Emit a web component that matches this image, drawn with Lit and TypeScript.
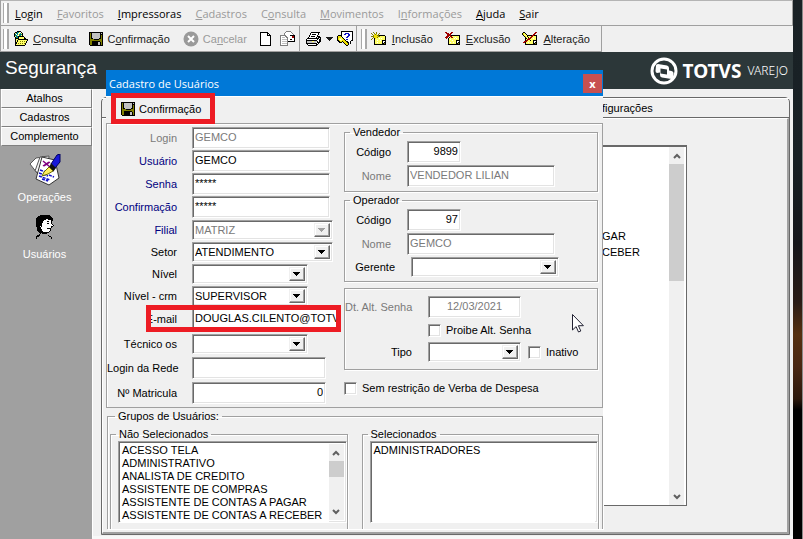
import { LitElement, html, svg, css } from "lit";
import { customElement, property } from "lit/decorators.js";

/* Icons are drawn as small bitmaps: one character per pixel. */
const PALETTE: Record<string, string> = {
  k: "#000000", y: "#ffff66", o: "#808000", w: "#ffffff", g: "#808080",
  l: "#c0c0c0", r: "#a00000", b: "#000080", B: "#1010c8", t: "#008080",
  G: "#909090", Y: "#f0e000", p: "#800080",
};

const BITMAPS: Record<string, string[]> = {
  folder: [
    "....kkkk........",
    "..kkttywk.......",
    ".kyttwytyk......",
    ".ktwtytttk......",
    ".kttywttyk......",
    ".kyttkkkkkk.....",
    "..kttkyyyyyk....",
    "..kkkkyyyyykk...",
    "..kyykkkkkkkkkk.",
    "..kykyyyyyyyyyk.",
    "..kykyyoyoyoyk..",
    "..kkyyyyyyyyyk..",
    "..kkyoyoyoyok...",
    "..kyyyyyyyyyk...",
    "..kkkkkkkkkk....",
  ],
  disk: [
    "kkkkkkkkkkkkkk",
    "kokllllllllklk",
    "kokllllllllkkk",
    "kokllllllllkok",
    "kokllllllllkok",
    "kokllllllllkok",
    "kokkllllllkkok",
    "kooookkkkkoook",
    "kooooooooooook",
    "kookkkkkkkkook",
    "kookkkkkkllkok",
    "kookkkkkkllkok",
    "kookkkkkkllkok",
    ".kkkkkkkkkkkkk",
  ],
  page: [
    "kkkkkkkk...",
    "kwwwwwwkk..",
    "kwwwwwwkwk.",
    "kwwwwwwkkkk",
    "kwwwwwwwwwk",
    "kwwwwwwwwwk",
    "kwwwwwwwwwk",
    "kwwwwwwwwwk",
    "kwwwwwwwwwk",
    "kwwwwwwwwwk",
    "kwwwwwwwwwk",
    "kwwwwwwwwwk",
    "kwwwwwwwwwk",
    "kkkkkkkkkkk",
  ],
  mail: [
    "......ggggg.....",
    ".....gwwwwwg....",
    "....gwwwwwwwg...",
    "....gwwwwwwwwg..",
    "ggggggwwwwkkkkk.",
    "gwwwwggwwwwwrrk.",
    "gwlllwggwwwwrrk.",
    "gwwwwwwgwwwwwwk.",
    "gwlllllgwwkkwwk.",
    "gwwwwwwgwwwwwwk.",
    "gwlllllgkkkkkkk.",
    "gwwwwwwg........",
    "gwlllllg........",
    "gwwwwwwg........",
    "gggggggg........",
  ],
  printer: [
    ".....kkkkkkkkk..",
    "....kwwwwwwwk...",
    "....kwkkkkwwk...",
    "...kwwwwwwwk....",
    "...kwkkkkwwkkk..",
    "..kwwwwwwwk.kkk.",
    ".kkkkkkkkkkkkwk.",
    "kwwwwwwwwwwkwkk.",
    "kkkkkkkkkkkwwkk.",
    "klllllyylllkwkk.",
    "klllllllllwkkk..",
    "kkkkkkkkkkkwk...",
    ".kwwwwwwwwkk....",
    "..kkkkkkkkk.....",
  ],
  help: [
    "....kkkkkkkkkkkk",
    "....kwwwwwwwwwwk",
    "....kwwwBBBBwwwk",
    "....kwwBBwwBBwwk",
    ".kkkkwwwwwwBBwwk",
    "kYYYkwwwwwBBwwwk",
    "kYYYykwwwBBwwwwk",
    "kYyyyYkwwwwwwwwk",
    "kYywyyYkwBBwwwwk",
    "kkYyyYYYkwwwwwkk",
    ".kkYYkYYYkkwwk..",
    "..kkk.kYYYkkwk..",
    ".......kYYYk.k..",
    "........kYYk....",
    ".........kk.....",
  ],
  include: [
    "..o..o...........",
    "o..o.o..o........",
    ".o.YoY.o.........",
    "..oYYYookkkkkk...",
    "oooYYYYooyyyyyk..",
    "..oYYYoyyyyyyyk..",
    ".o.kYyyywywyyyk..",
    "o..kyyyyyyyyyyk..",
    "...kyywyywykkkk..",
    "...kyyyyyyykwwk..",
    "...kyywyyyykwkk..",
    "...kyyyyyyykkok..",
    "...kkkkkkkkkkkk..",
  ],
  exclude: [
    "rr....rr.........",
    ".rrr.rr..........",
    "..rrrr...........",
    "..rrrrkkkkkkkkk..",
    ".rrr.rryyyyyyyk..",
    "rrr.kyrryywyyyk..",
    ".r.kyyyyywywyyk..",
    "...kywyyyyyyyyk..",
    "...kyyywyyykkkk..",
    "...kyyyyyyykwwk..",
    "...kywyywyykwkk..",
    "...kyyyyyyykkok..",
    "...kkkkkkkkkkkk..",
  ],
  edit: [
    ".kk..........rr..",
    "kYyk........rr...",
    "kYyyk......rr....",
    ".kyyykkkkkrrkkk..",
    "..kYykyyyrryyyk..",
    "...kyykyrryyyyk..",
    "...kkyrrryywyyk..",
    "...kyrrryyyyyyk..",
    "...krryykyykkkk..",
    "..rrryyyyyykwwk..",
    ".rrkyywyyyykwkk..",
    "...kyyyyyyykkok..",
    "...kkkkkkkkkkkk..",
  ],
  face: [
    "....kkkkkkkkkk....",
    "..kkkkkkkkkkkkk...",
    ".kkkkkkkkkkkkkkk..",
    "kkkkkkkkkkkkkkkkk.",
    "kkkkkkkkkkwwkkkkk.",
    "kkkkkkkkwwwwwwwkk.",
    "kkkkkkkwwwwkkwwk..",
    "kkkkkkkwwwwwwwwk..",
    "kkkkkkwwwwwkkwwk..",
    "kkkkkkwwwwwwwwwwk.",
    "kkkkkkwwwwwwwwwwwk",
    "kkkkwkwwwwwwwwwkk.",
    ".kkkkwwwwwwwwwwk..",
    ".kkkkwwwwwwkkkk...",
    ".kkkkkwwwwwwwwk...",
    ".kkkkkwwwwwwwwk...",
    "..kkkkkwwwwwwk....",
    "...kkkkkkkkkk.....",
    "....k.kkkkk.......",
    "...k..............",
    ".kkk........k.....",
    "kkk..........kk...",
    "k..............k..",
    "k..............k..",
  ],
};

function bitmap(name: string) {
  const rows = BITMAPS[name];
  const w = Math.max(...rows.map((r) => r.length));
  const cells = rows.flatMap((row, y) => {
    const out = [];
    for (let x = 0; x < row.length; ) {
      let n = 1;
      while (row[x + n] === row[x]) n++;
      if (row[x] !== ".") out.push(svg`<rect x=${x} y=${y} width=${n} height="1" fill=${PALETTE[row[x]]}></rect>`);
      x += n;
    }
    return out;
  });
  return html`<svg class="icon" width=${w} height=${rows.length} viewBox="0 0 ${w} ${rows.length}" shape-rendering="crispEdges" aria-hidden="true">${cells}</svg>`;
}

const cancelIcon = html`<svg class="icon" width="16" height="16" viewBox="0 0 16 16" aria-hidden="true">
  <circle cx="8" cy="8" r="7.5" fill="#9a9a9a"></circle>
  <path d="M5 5l6 6M11 5l-6 6" stroke="#fff" stroke-width="2"></path></svg>`;

const papersIcon = html`<svg class="icon" width="32" height="32" viewBox="0 0 32 32" aria-hidden="true">
  <path d="M1 10L7 4L14 3L12 22L8 19Z" fill="#fff" stroke="#555"></path>
  <path d="M6 17L11 3L20 2L18 24Z" fill="#f4f4f4" stroke="#555"></path>
  <path d="M13 3L26 6L30 24L20 31L7 25Z" fill="#fff" stroke="#333"></path>
  <path d="M14 7l7 6M20 8l-6 4M15 12l6-4" stroke="#800080" stroke-width="1.5"></path>
  <path d="M11 16l6 2M10 19l9 3M10 22l11 4M20 21l5 2M13 25l6 2" stroke="#1010c8" stroke-width="1.5" stroke-dasharray="3 1"></path>
  <path d="M31 0v8l-5 6-4-4 6-9z" fill="#1818d8" stroke="#000060"></path>
  <path d="M22 9l5 5-3 4-4-4z" fill="#111"></path>
  <path d="M20 13l4 4-5 3-6 2 2-4z" fill="#ffee60" stroke="#6a6a00"></path></svg>`;

const caret = html`<svg width="8" height="4" viewBox="0 0 8 4" shape-rendering="crispEdges" aria-hidden="true"><path d="M0 0h7v1h-1v1h-1v1h-1v1h-1v-1h-1v-1h-1v-1h-1z" fill="currentColor"></path></svg>`;

const chevron = (down: boolean) => html`<svg width="8" height="6" viewBox="0 0 8 6" aria-hidden="true">
  <path d=${down ? "M1 1L4 4L7 1" : "M1 5L4 2L7 5"} fill="none" stroke="#606060" stroke-width="2"></path></svg>`;

const base = css`
  * { box-sizing: border-box; }
  .icon { display: block; flex: none; }
  button, input, select { font: inherit; color: inherit; margin: 0; border-radius: 0; outline: none; }
  button { padding: 0; background: none; border: 0; }
`;

const sunken = css`
  .sunken {
    background: #fff;
    border: 1px solid;
    border-color: #a0a0a0 #fff #fff #a0a0a0;
    box-shadow: inset 1px 1px #696969, inset -1px -1px #e3e3e3;
  }
`;

@customElement("menu-strip")
class MenuStrip extends LitElement {
  static styles = [base, css`
    :host { display: block; background: #f0f0f0; border-left: 1px solid #a0a0a0; }
    .row { display: flex; align-items: center; height: 26px; border-bottom: 1px solid #a0a0a0; }
    .menus { gap: 14px; font: 11px "Open Sans", sans-serif; color: #000; border-right: 1px solid #a0a0a0; border-top: 1px solid #b4b4b4; }
    .menus button { white-space: nowrap; }
    button:disabled { color: #9a9a9a; }
    .grip { flex: none; width: 6px; height: 20px; margin: 0 4px 0 2px; border: solid #a8a8a8; border-width: 0 1px; background: linear-gradient(#a8a8a8, #a8a8a8) 3px 0 / 1px 100% no-repeat, #fff; }
    .menus .grip { margin-right: -8px; }
    .tools { width: max-content; color: #1c1c1c; border-right: 1px solid #a0a0a0; padding-right: 11px; }
    .tool { display: flex; align-items: center; gap: 4px; white-space: nowrap; }
    .a { margin-right: 13px; }
    .b { margin-right: 12px; }
    .c { margin-right: 9px; }
    .d { margin-right: 3px; }
    .sep { align-self: stretch; width: 1px; background: #a0a0a0; margin-right: 6px; }
    .thin { margin-right: 2px; }
  `];
  render() {
    const menus: [string, string, string, boolean][] = [
      ["", "L", "ogin", true], ["", "F", "avoritos", false], ["", "I", "mpressoras", true],
      ["", "C", "adastros", false], ["C", "o", "nsulta", false], ["", "M", "ovimentos", false],
      ["I", "n", "formações", false], ["", "A", "juda", true], ["", "S", "air", true],
    ];
    return html`
      <nav class="row menus"><span class="grip"></span>
        ${menus.map(([p, u, s, on]) => html`<button ?disabled=${!on}>${p}<u>${u}</u>${s}</button>`)}
      </nav>
      <div class="row tools"><span class="grip"></span>
        <button class="tool a">${bitmap("folder")}<span><u>C</u>onsulta</span></button>
        <button class="tool a">${bitmap("disk")}<span>C<u>o</u>nfirmação</span></button>
        <button class="tool a" disabled>${cancelIcon}<span>Ca<u>n</u>celar</span></button>
        <button class="tool c" aria-label="Novo">${bitmap("page")}</button>
        <button class="tool d" aria-label="Mensagem">${bitmap("mail")}</button>
        <span class="sep"></span>
        <button class="tool d" aria-label="Imprimir">${bitmap("printer")}${caret}</button>
        <button class="tool d" aria-label="Ajuda">${bitmap("help")}</button>
        <span class="sep thin"></span><span class="grip"></span>
        <button class="tool b">${bitmap("include")}<span><u>I</u>nclusão</span></button>
        <button class="tool b">${bitmap("exclude")}<span><u>E</u>xclusão</span></button>
        <button class="tool">${bitmap("edit")}<span><u>A</u>lteração</span></button>
      </div>`;
  }
}

@customElement("side-nav")
class SideNav extends LitElement {
  static styles = [base, css`
    :host { display: flex; flex-direction: column; width: 92px; border-left: 1px solid #a0a0a0; background: #a0a0a0; }
    .tab { height: 19px; background: #f0f0f0; border: 1px solid; border-color: #fff #808080 #808080 #fff; text-align: center; color: #000; padding: 0 4px 1px 0; }
    .item { display: flex; flex-direction: column; align-items: center; gap: 4px; color: #fff; padding-right: 4px; }
    .first { margin-top: 8px; margin-bottom: 11px; }
    .last { gap: 8px; }
  `];
  render() {
    return html`
      ${["Atalhos", "Cadastros", "Complemento"].map((t) => html`<button class="tab">${t}</button>`)}
      <button class="item first">${papersIcon}<span>Operações</span></button>
      <button class="item last">${bitmap("face")}<span>Usuários</span></button>`;
  }
}

@customElement("scroll-bar")
class ScrollBar extends LitElement {
  @property({ type: Number }) thumb = 20;
  static styles = css`
    :host { display: flex; flex-direction: column; width: 15px; flex: none; background: #f0f0f0; }
    .arrow { display: flex; align-items: center; justify-content: center; height: 17px; flex: none; }
    .track { flex: 1; }
    .thumb { background: #cdcdcd; }
  `;
  render() {
    return html`<span class="arrow">${chevron(false)}</span>
      <div class="track"><div class="thumb" style="height:${this.thumb}%"></div></div>
      <span class="arrow">${chevron(true)}</span>`;
  }
}

@customElement("user-dialog")
class UserDialog extends LitElement {
  static styles = [base, sunken, css`
    :host { display: block; background: #f0f0f0; color: #000; }
    .title { display: flex; align-items: center; height: 26px; background: #0078d7; color: #fff; padding: 0 1px 0 3px; font: 11px "Open Sans", sans-serif; }
    .title h2 { flex: 1; margin: 0; font: inherit; }
    .close { width: 19px; height: 19px; background: #c75050; font: bold 11px/15px "Open Sans", sans-serif; }
    .bar { position: relative; height: 27px; padding: 0 0 2px 15px; display: flex; align-items: center; border-top: 1px solid #fff; }
    .confirm { display: flex; align-items: center; gap: 4px; }
    .mark { position: absolute; border: 5px solid #ed1c24; pointer-events: none; }
    .mark-bar { left: 5px; width: 104px; top: -4px; height: 31px; z-index: 2; }
    .mark-mail { left: 39px; right: 3px; top: -3px; bottom: -2px; z-index: 2; }
    .panel { border: 1px solid #a0a0a0; box-shadow: inset 1px 1px #fff; display: grid; grid-template-columns: 237px 1fr; padding: 0 4px 3px 0; }
    .left { padding-top: 3px; display: flex; flex-direction: column; }
    .set { display: flex; flex-direction: column; }
    .pitch1 { gap: 1px; }
    .pitch2 { gap: 2px; padding-top: 2px; }
    .pitch3 { gap: 3px; padding-top: 4px; }
    .f { display: flex; align-items: center; position: relative; }
    .f label { text-align: right; white-space: nowrap; flex: none; }
    .left label { width: 70px; margin-right: 15px; }
    .blue { color: #000080; }
    .dim { color: #7a7a7a; }
    .in { height: 22px; padding: 0 2px 2px; display: block; min-width: 0; }
    .in:disabled { color: #7a7a7a; }
    .num { text-align: right; }
    .mid { text-align: center; }
    .combo { position: relative; display: flex; height: 20px; padding: 2px; }
    .combo select { appearance: none; border: 0; background: #fff; width: 100%; padding: 0; opacity: 1; }
    .combo select:disabled { color: #7a7a7a; }
    .drop { flex: none; width: 16px; display: flex; align-items: center; justify-content: center; background: #f0f0f0; border: 1px solid; border-color: #f0f0f0 #696969 #696969 #f0f0f0; box-shadow: inset -1px -1px #a0a0a0, inset 1px 1px #fff; }
    .dim .drop { color: #a0a0a0; }
    .w54 { width: 54px; } .w93 { width: 93px; } .w116 { width: 116px; } .w134 { width: 134px; }
    .w138 { width: 138px; } .w141 { width: 141px; } .w148 { width: 148px; }
    fieldset { margin: 0; min-width: 0; padding: 0; border: 1px solid #a0a0a0; box-shadow: 1px 1px #fff, inset 1px 1px #fff; }
    legend { margin-left: 5px; padding: 0 3px; line-height: 14px; }
    .right { padding-top: 1px; display: flex; flex-direction: column; }
    .person { padding: 2px 0 4px; margin-bottom: 1px; }
    .person label { width: 46px; margin-right: 16px; }
    .person .wide { width: 50px; }
    .person .rows { display: flex; flex-direction: column; gap: 2px; }
    .status { margin-top: 5px; padding: 7px 0; display: flex; flex-direction: column; gap: 3px; }
    .status .lead { width: 67px; margin-right: 16px; }
    .check { display: flex; align-items: center; gap: 5px; white-space: nowrap; }
    .check input { appearance: none; width: 13px; height: 13px; flex: none; }
    .indent { margin-left: 83px; height: 18px; }
    .inactive { margin-left: 7px; }
    .free { margin-top: 11px; }
    .groups { display: grid; grid-template-columns: 1fr 1fr; column-gap: 14px; margin: 0 0 0 1px; padding: 4px 3px 0 2px; margin-top: 1px; border-bottom: 0; }
    .groups fieldset { border-bottom: 0; padding: 0 0 6px 7px; }
    .groups fieldset legend { margin-left: -2px; }
    .list { display: flex; height: 82px; padding: 2px; }
    .list select { flex: 1; min-width: 0; border: 0; padding: 0; background: #fff; overflow: hidden; color: #000; height: 78px; }
    .list option { padding: 0 1px; min-height: 13px; height: 13px; line-height: 14px; overflow: visible; white-space: nowrap; }
    .pointer { position: absolute; left: 466px; top: 244px; }
  `];

  field(id: string, label: string, value: string, w: string, o: { blue?: boolean; off?: boolean; cls?: string; mark?: boolean } = {}) {
    return html`<div class="f"><label for=${id} class=${o.blue ? "blue" : o.off ? "dim" : ""}>${label}</label>
      <input id=${id} class="in sunken ${w} ${o.cls ?? ""}" type="text" .value=${value} ?disabled=${o.off}>
      ${o.mark ? html`<span class="mark mark-mail"></span>` : ""}</div>`;
  }
  combo(id: string, label: string, value: string, w: string, cls = "", off = false) {
    return html`<div class="f"><label for=${id} class=${cls}>${label}</label>
      <span class="combo sunken ${w} ${off ? "dim" : ""}"><select id=${id} ?disabled=${off}><option>${value}</option></select><span class="drop">${caret}</span></span></div>`;
  }

  render() {
    const groups = ["ACESSO TELA", "ADMINISTRATIVO", "ANALISTA DE CREDITO", "ASSISTENTE DE COMPRAS", "ASSISTENTE DE CONTAS A PAGAR", "ASSISTENTE DE CONTAS A RECEBER"];
    return html`
      <header class="title"><h2>Cadastro de Usuários</h2><button class="close" aria-label="Fechar">x</button></header>
      <div class="bar"><button class="confirm">${bitmap("disk")}<span>Confirmação</span></button><span class="mark mark-bar"></span></div>
      <div class="panel">
        <div class="left">
          <div class="set pitch1">
            ${this.field("login", "Login", "GEMCO", "w138", { off: true })}
            ${this.field("user", "Usuário", "GEMCO", "w138", { blue: true })}
            ${this.field("pass", "Senha", "*****", "w138", { blue: true })}
            ${this.field("pass2", "Confirmação", "*****", "w138", { blue: true })}
          </div>
          <div class="set pitch2">
            ${this.combo("branch", "Filial", "MATRIZ", "w141", "blue", true)}
            ${this.combo("sector", "Setor", "ATENDIMENTO", "w141")}
            ${this.combo("level", "Nível", "", "w116")}
            ${this.combo("crm", "Nível - crm", "SUPERVISOR", "w116")}
            ${this.field("mail", "E-mail", "DOUGLAS.CILENTO@TOTVS", "w148", { mark: true })}
          </div>
          <div class="set pitch3">
            ${this.combo("tech", "Técnico os", "", "w116")}
            ${this.field("net", "Login da Rede", "", "w134")}
            ${this.field("reg", "Nº Matricula", "0", "w134", { cls: "num" })}
          </div>
        </div>
        <div class="right">
          <fieldset class="person"><legend>Vendedor</legend><div class="rows">
            ${this.field("vcod", "Código", "9899", "w54", { cls: "num" })}
            ${this.field("vnome", "Nome", "VENDEDOR LILIAN", "w148", { off: true })}
          </div></fieldset>
          <fieldset class="person"><legend>Operador</legend><div class="rows">
            ${this.field("ocod", "Código", "97", "w54", { cls: "num" })}
            ${this.field("onome", "Nome", "GEMCO", "w148", { off: true })}
            ${this.combo("mgr", "Gerente", "", "w148", "wide")}
          </div></fieldset>
          <fieldset class="status">
            <div class="f"><label class="lead dim" for="dt">Dt. Alt. Senha</label><input id="dt" class="in sunken w93 mid" value="12/03/2021" disabled></div>
            <label class="check indent"><input type="checkbox" class="sunken">Proibe Alt. Senha</label>
            <div class="f"><label class="lead" for="tipo">Tipo</label>
              <span class="combo sunken w93"><select id="tipo"><option></option></select><span class="drop">${caret}</span></span>
              <label class="check inactive"><input type="checkbox" class="sunken">Inativo</label></div>
          </fieldset>
          <label class="check free"><input type="checkbox" class="sunken">Sem restrição de Verba de Despesa</label>
        </div>
      </div>
      <fieldset class="groups"><legend>Grupos de Usuários:</legend>
        <fieldset><legend>Não Selecionados</legend>
          <div class="list sunken"><select multiple size="6" aria-label="Não Selecionados">${groups.map((g) => html`<option>${g}</option>`)}</select><scroll-bar thumb="38"></scroll-bar></div>
        </fieldset>
        <fieldset><legend>Selecionados</legend>
          <div class="list sunken"><select multiple size="6" aria-label="Selecionados"><option>ADMINISTRADORES</option></select></div>
        </fieldset>
      </fieldset>
      <svg class="pointer" width="12" height="19" viewBox="0 0 12 19" aria-hidden="true">
        <path d="M.5.5v15.5l3.6-3.4 2.4 5.4 2.3-1-2.4-5.3h5z" fill="#fff" stroke="#223"></path></svg>`;
  }
}

@customElement("app-root")
class AppRoot extends LitElement {
  static styles = [base, css`
    :host { display: flex; position: relative; min-height: 100vh; overflow: hidden; font: 11px/14px "Liberation Sans", Arial, sans-serif; color: #000; background: #f8f8f8; }
    .window { flex: 1; min-width: 0; display: flex; flex-direction: column; }
    .wall { flex: none; width: 10px; border-right: 1px solid #8a8a8a; background: linear-gradient(#1a2226 0%, #182024 30%, #15161a 45%, #2a1c16 56%, #56300f 62%, #4a2712 68%, #2c180c 74%, #000 76%); }
    .brand { display: flex; align-items: center; justify-content: space-between; height: 37px; padding: 0 5px; background: #2c3739; color: #fff; }
    .brand h1 { margin: 0 0 5px; font: 19px "Liberation Sans", Arial, sans-serif; }
    .logo { display: flex; align-items: center; }
    .totvs { font: bold 19px/20px "Noto Sans", sans-serif; margin: 0 6px 0 5px; }
    .varejo { font: 300 12px/20px "Noto Sans", sans-serif; }
    .work { flex: 1; display: flex; }
    .content { flex: 1; min-width: 0; display: flex; padding: 8px 3px 1px 8px; background: #f0f0f0; border-left: 1px solid #fff; border-bottom: 3px solid #f8f8f8; }
    .tabs { flex: 1; display: flex; flex-direction: column; border: 1px solid #696969; border-top-left-radius: 5px; border-top-right-radius: 5px; background: #f0f0f0; }
    .head { display: flex; height: 20px; align-items: center; border-bottom: 1px solid #696969; border-top: 1px solid #fff; }
    .tab { margin-left: auto; width: 187px; text-align: left; }
    .page { flex: 1; display: flex; padding: 26px 100px 26px 8px; border: solid; border-width: 1px 2px 2px 1px; border-color: #fff #a0a0a0 #a0a0a0 #fff; }
    .box { flex: 1; display: flex; justify-content: flex-end; background: #fff; border: 1px solid #696969; border-top-width: 2px; padding-right: 2px; }
    ul { list-style: none; margin: 81px 0 0; padding: 0; width: 67px; }
    li { height: 16px; line-height: 16px; }
    .dialog { position: absolute; left: 106px; right: 200px; top: 70px; }
  `];
  render() {
    return html`
      <div class="window">
        <menu-strip></menu-strip>
        <header class="brand"><h1>Segurança</h1>
          <div class="logo">
            <svg class="icon" width="28" height="28" viewBox="0 0 28 28" aria-hidden="true">
              <circle cx="14" cy="14" r="12" fill="none" stroke="#fff" stroke-width="3"></circle>
              <path d="M6 8.500Q6 7 8 7l9 1.500q2 .5 2 2.500v2.500l2.500 .5q2 .5 2 2v4q0 2.500-2 2l-9.500-1.500q-2-.5-2-2.500v-2.500L7 16q-1.500-.5-1.500-2z" fill="#fff"></path>
              <path d="M10.500 11.500l6.500 1v5l-6.500-1z" fill="#2c3739"></path>
            </svg>
            <span class="totvs">TOTVS</span><span class="varejo">VAREJO</span>
          </div>
        </header>
        <div class="work">
          <side-nav></side-nav>
          <main class="content"><div class="tabs">
            <div class="head"><button class="tab">figurações</button></div>
            <div class="page"><div class="box">
              <ul><li>GAR</li><li>CEBER</li></ul><scroll-bar thumb="36"></scroll-bar>
            </div></div>
          </div></main>
        </div>
      </div>
      <div class="wall"></div>
      <user-dialog class="dialog"></user-dialog>`;
  }
}
